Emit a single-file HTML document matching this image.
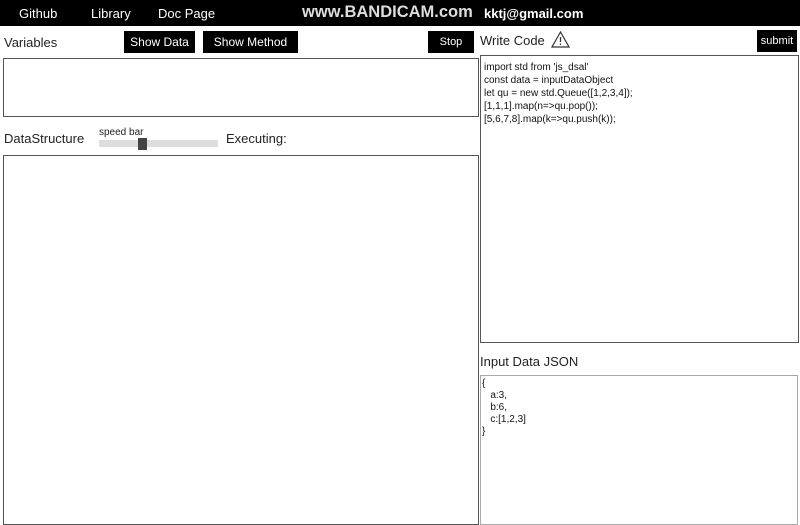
<!DOCTYPE html>
<html><head><style>
body{margin:0;width:800px;height:521px;overflow:hidden;background:#fff;font-family:"Liberation Sans",sans-serif;position:relative}
.a{position:absolute}
.nav{left:0;top:0;width:800px;height:26px;background:#000;color:#fff}
.btn{background:#000;color:#fff;font-size:12px;display:flex;align-items:center;justify-content:center}
.box{border:1px solid #555;box-sizing:border-box}
.t{font-size:13px;color:#222}
.code{font-size:10px;line-height:13px;color:#111}
</style></head><body>
<div class="a nav">
<span class="a" style="left:19px;top:6px;font-size:13px">Github</span>
<span class="a" style="left:91px;top:6px;font-size:13px">Library</span>
<span class="a" style="left:158px;top:6px;font-size:13px">Doc Page</span>
<span class="a" style="left:302px;top:3px;font-size:16.5px;font-weight:bold;color:#ddd">www.BANDICAM.com</span>
<span class="a" style="left:484px;top:6px;font-size:13px;font-weight:bold">kktj@gmail.com</span>
</div>
<span class="a t" style="left:4px;top:35px">Variables</span>
<div class="a btn" style="left:124px;top:31px;width:71px;height:22px">Show Data</div>
<div class="a btn" style="left:203px;top:31px;width:95px;height:22px">Show Method</div>
<div class="a btn" style="left:428px;top:31px;width:46px;height:22px;font-size:11px">Stop</div>
<span class="a t" style="left:480px;top:33px">Write Code</span>
<svg class="a" style="left:551px;top:31px" width="19" height="17" viewBox="0 0 19 17"><path d="M9.5 1L1 16h17z" fill="none" stroke="#333" stroke-width="1.2"/><path d="M9.5 6v5M9.5 12.5v1.5" stroke="#333" stroke-width="1.3"/></svg>
<div class="a btn" style="left:757px;top:30px;width:40px;height:22px;font-size:11px">submit</div>
<div class="a box" style="left:3px;top:58px;width:476px;height:59px"></div>
<span class="a t" style="left:4px;top:131px">DataStructure</span>
<span class="a" style="left:99px;top:127px;font-size:10px;color:#222">speed bar</span>
<div class="a" style="left:99px;top:140px;width:119px;height:7px;background:#ddd"></div>
<div class="a" style="left:138px;top:138px;width:9px;height:12px;background:#444"></div>
<span class="a t" style="left:226px;top:131px">Executing:</span>
<div class="a box" style="left:3px;top:155px;width:476px;height:370px"></div>
<div class="a box" style="left:480px;top:55px;width:319px;height:288px"></div>
<div class="a code" style="left:484px;top:61px">import std from 'js_dsal'<br>const data = inputDataObject<br>let qu = new std.Queue([1,2,3,4]);<br>[1,1,1].map(n=&gt;qu.pop());<br>[5,6,7,8].map(k=&gt;qu.push(k));</div>
<span class="a t" style="left:480px;top:354px">Input Data JSON</span>
<div class="a box" style="left:480px;top:375px;width:318px;height:150px;border-color:#aaa"></div>
<div class="a code" style="left:482px;top:378px;line-height:12px">{<br>&nbsp;&nbsp;&nbsp;a:3,<br>&nbsp;&nbsp;&nbsp;b:6,<br>&nbsp;&nbsp;&nbsp;c:[1,2,3]<br>}</div>
</body></html>
